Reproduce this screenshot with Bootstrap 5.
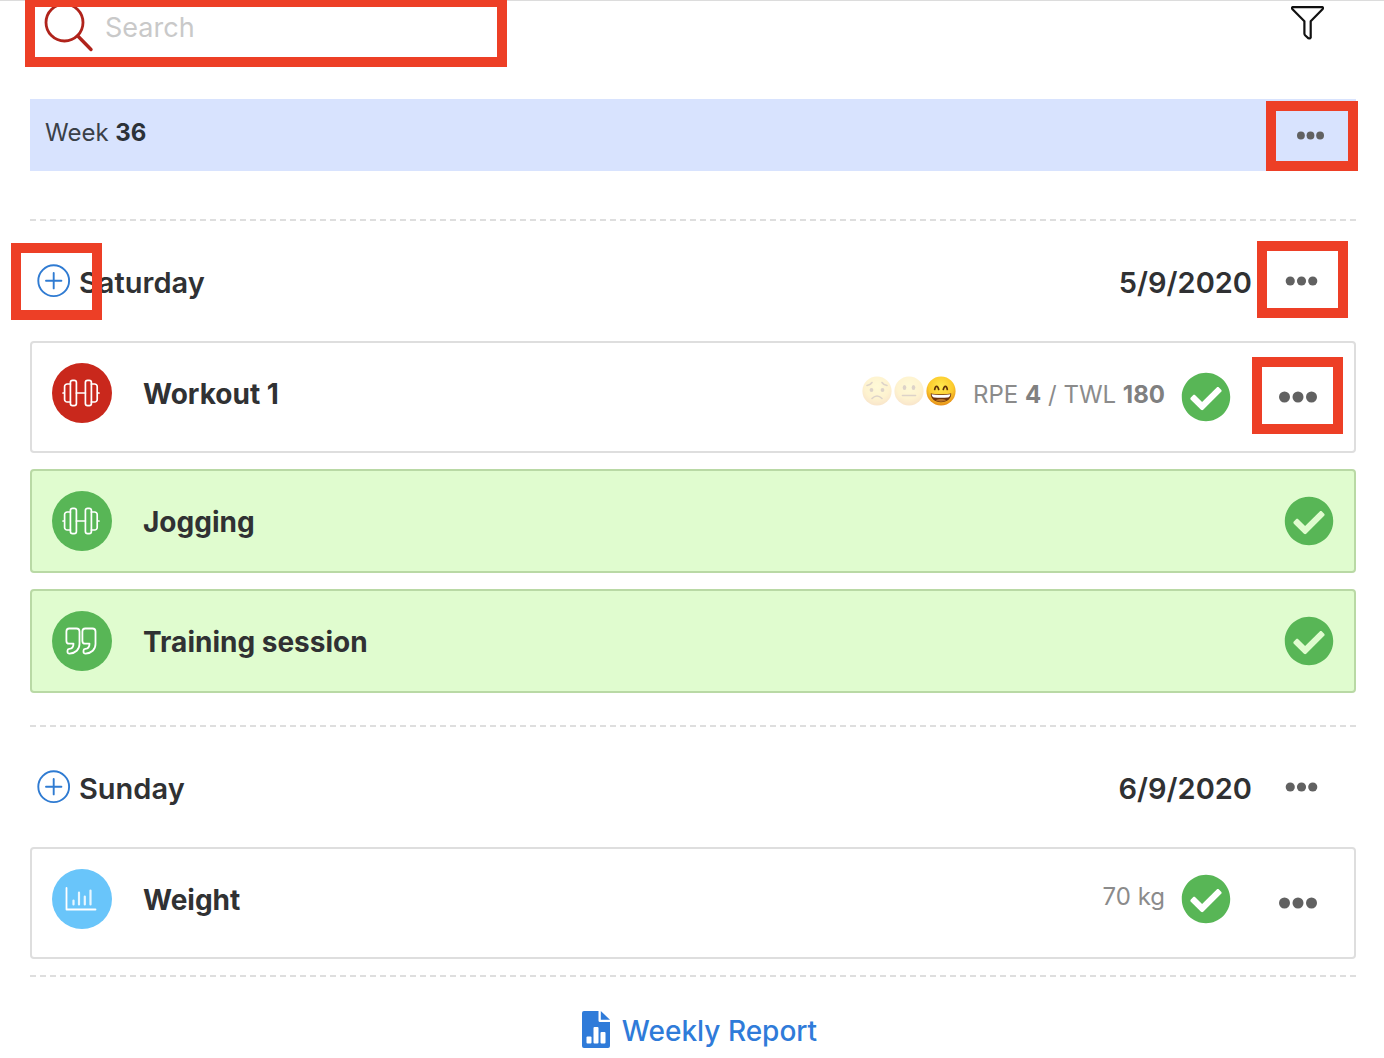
<!DOCTYPE html>
<html lang="en">
<head>
<meta charset="utf-8">
<meta name="viewport" content="width=device-width, initial-scale=1">
<title>Training week</title>
<link href="https://cdn.jsdelivr.net/npm/bootstrap@5.3.0/dist/css/bootstrap.min.css" rel="stylesheet">
<style>
  body { font-family: Inter, "Liberation Sans", sans-serif; color: #303133; background: #fff; line-height: 1.25; }
  svg { display: block; flex: none; }
  .page { padding: 0 28px 0 30px; border-top: 1px solid #dcdcdc; }
  .topbar { height: 98px; }
  .search-box { width: 472px; max-width: 80%; height: 61px; padding: 0 0 2px 14px; gap: 11px; }
  .search-box input { font-size: 27px; padding: 0 0 4px; color: #303133; background: none; box-shadow: none !important; }
  .search-box input::placeholder { color: #c9c9c9; opacity: 1; }
  .filter-btn { margin: 4px 31px 0 0; color: #111; }
  .week-bar { height: 72px; background: #d8e3fe; padding: 0 9px 0 15px; margin-bottom: 48px; font-size: 24px; color: #3a4048; }
  .week-bar strong { font-weight: 700; color: #2c3238; }
  .dash-rule { height: 2px; background: repeating-linear-gradient(90deg, #dedede 0 6px, transparent 6px 10px); }
  .day-head { height: 120px; padding: 0 18px 0 7px; font-size: 29px; }
  .day-head h2, .day-head time { font-size: 29px; line-height: 36px; font-weight: 600; margin: 0; }
  .add-btn { color: #2f7bd2; margin-right: 8px; }
  .more-btn { width: 73px; height: 60px; color: #616161; }
  .day-head .more-btn { margin-left: 13px; }
  .plain-btn { padding: 0; border: 0; border-radius: 0; line-height: 1; }
  .entry { border: 2px solid #dedede; border-radius: 4px; padding: 20px; margin-bottom: 16px; }
  .entry-tall { min-height: 112px; }
  .entry-done { background: #e0fccf; border-color: #b9d9a5; }
  .entry h3 { font-size: 28px; line-height: 34px; font-weight: 700; margin: 0; padding-top: 2px; }
  .disc { width: 60px; height: 60px; padding-right: 2px; color: #fff; }
  .disc-red { background: #c9281c; }
  .disc-green { background: #58b656; }
  .disc-blue { background: #69c5fa; }
  .entry-lead { gap: 31px; }
  .tick { color: #58b656; }
  .meta { font-size: 24px; color: #8b8b8b; gap: 16px; margin-right: 30px; }
  .meta strong { font-weight: 700; color: #808080; }
  .moods { gap: 2px; padding-bottom: 12px; margin-right: 1px; }
  .faded { opacity: .22; }
  .report { color: #2f7bd9; font-size: 28px; font-weight: 500; gap: 12px; padding: 33px 0 10px 13px; }
  /* red call-out frames laid over the controls */
  .callout { position: relative; }
  .callout::after { content: ""; position: absolute; border: 10px solid #ed3f26; pointer-events: none; inset: -10px -9px -7px -9px; }
  .callout-search::after { inset: -4px -5px -5px -5px; }
  .callout-week::after { inset: -4px -11px -6px -8px; }
  .callout-day::after { inset: -10px -10px -7px -8px; }
  .callout-add::after { inset: -21px -31px -22px -26px; z-index: 1; }
</style>
<script src="https://cdn.jsdelivr.net/npm/bootstrap@5.3.0/dist/js/bootstrap.bundle.min.js"></script>
</head>
<body>
<svg width="0" height="0" class="position-absolute" aria-hidden="true">
  <symbol id="dots" viewBox="0 0 38 12"><g fill="currentColor"><circle cx="5.5" cy="6" r="5.5"/><circle cx="19" cy="6" r="5.5"/><circle cx="32.5" cy="6" r="5.5"/></g></symbol>
  <symbol id="plus" viewBox="0 0 34 34"><g fill="none" stroke="currentColor" stroke-width="1.9" stroke-linecap="round"><circle cx="16.7" cy="16.7" r="15.4"/><path d="M16.7 9v15.4M9 16.7h15.4"/></g></symbol>
  <symbol id="tick" viewBox="0 0 512 512"><path fill="currentColor" d="M504 256c0 136.967-111.033 248-248 248S8 392.967 8 256 119.033 8 256 8s248 111.033 248 248zM227.314 387.314l184-184c6.248-6.248 6.248-16.379 0-22.627l-22.627-22.627c-6.248-6.249-16.379-6.249-22.628 0L216 308.118l-70.059-70.059c-6.248-6.248-16.379-6.248-22.628 0l-22.627 22.627c-6.248 6.248-6.248 16.379 0 22.627l104 104c6.249 6.249 16.379 6.249 22.628.001z"/></symbol>
  <symbol id="barbell" viewBox="0 0 38 28"><g fill="none" stroke="currentColor" stroke-width="1.7" stroke-linecap="round" stroke-linejoin="round"><rect x="8.4" y="1.3" width="6" height="25.4" rx="2.2"/><rect x="23.4" y="1.3" width="6" height="25.4" rx="2.2"/><path d="M8.4 5H5.200a2.600 2.600 0 0 0-2.600 2.600v12.800a2.600 2.600 0 0 0 2.600 2.600h3.200M29.400 5h3.200a2.600 2.600 0 0 1 2.600 2.600v12.800a2.600 2.600 0 0 1-2.600 2.600h-3.200M14.400 14h9M1 14h1.600M35.200 14h1.800"/></g></symbol>
</svg>

<div class="page">
  <header class="topbar d-flex justify-content-between align-items-start">
    <label class="search-box callout callout-search d-flex align-items-center">
      <svg width="50" height="54" viewBox="0 0 50 54" fill="none" stroke="#b0231b" stroke-width="2.800" stroke-linecap="round"><circle cx="20.500" cy="18.500" r="18.500"/><path d="M33.800 32 47 45.500" stroke-width="3.400"/></svg>
      <input type="search" class="form-control border-0" placeholder="Search" aria-label="Search">
    </label>
    <button type="button" class="btn plain-btn filter-btn" aria-label="Filter">
      <svg width="35" height="36" viewBox="0 0 35 36" fill="none" stroke="currentColor" stroke-width="2.200" stroke-linejoin="round"><path d="M2.500 2.200h30q1 .8 0 2L20.700 16.200V32.500q-.6 1.400-2.200.8L15.300 30.500q-.9-.8-.9-2V16.200L2.500 4.200q-1-1.200 0-2z"/></svg>
    </button>
  </header>

  <main>
    <div class="week-bar d-flex align-items-center justify-content-between">
      <div class="pb-1">Week <strong>36</strong></div>
      <button type="button" class="btn plain-btn more-btn callout callout-week d-flex align-items-center justify-content-center" aria-label="Week options"><svg width="27" height="9"><use href="#dots"/></svg></button>
    </div>

    <section>
      <div class="dash-rule"></div>
      <div class="day-head d-flex align-items-center">
        <button type="button" class="btn plain-btn add-btn callout callout-add" aria-label="Add to Saturday"><svg width="34" height="34"><use href="#plus"/></svg></button>
        <h2 class="pt-1">Saturday</h2>
        <time class="pt-1 ms-auto" datetime="2020-09-05">5/9/2020</time>
        <button type="button" class="btn plain-btn more-btn callout callout-day d-flex align-items-center justify-content-center" aria-label="Saturday options"><svg width="33" height="10"><use href="#dots"/></svg></button>
      </div>

      <article class="entry entry-tall d-flex justify-content-between">
        <div class="entry-lead d-flex align-items-center align-self-start">
          <span class="disc disc-red rounded-circle d-flex align-items-center justify-content-center"><svg width="38" height="28"><use href="#barbell"/></svg></span>
          <h3>Workout 1</h3>
        </div>
        <div class="d-flex align-items-center">
          <div class="meta d-flex align-items-center">
            <div class="moods d-flex">
              <svg class="faded" width="30" height="30" viewBox="0 0 30 30" role="img" aria-label="Worried"><circle cx="15" cy="15" r="14.600" fill="url(#skin)"/><g fill="none" stroke="#6a3d10" stroke-width="1.600" stroke-linecap="round"><path d="M10 22.500q5-5 10 0M5 9.500q3.500-.5 5-3M25 9.500q-3.500-.5-5-3"/></g><circle cx="9.500" cy="14" r="1.900" fill="#6a3d10"/><circle cx="20.500" cy="14" r="1.900" fill="#6a3d10"/></svg>
              <svg class="faded" width="30" height="30" viewBox="0 0 30 30" role="img" aria-label="Neutral"><circle cx="15" cy="15" r="14.600" fill="url(#skin)"/><path d="M8.500 19.500h13" stroke="#6a3d10" stroke-width="1.600" stroke-linecap="round"/><ellipse cx="10.500" cy="11.500" rx="1.800" ry="2.500" fill="#6a3d10"/><ellipse cx="19.500" cy="11.500" rx="1.800" ry="2.500" fill="#6a3d10"/></svg>
              <svg width="30" height="30" viewBox="0 0 30 30" role="img" aria-label="Happy">
                <defs><radialGradient id="skin" cx=".5" cy=".35" r=".7"><stop offset="0" stop-color="#ffe94e"/><stop offset=".6" stop-color="#fcca2c"/><stop offset="1" stop-color="#e07f14"/></radialGradient></defs>
                <circle cx="15" cy="15" r="14.600" fill="url(#skin)"/><path d="M4.800 17.300c3 1.300 17.400 1.300 20.400 0 .6 5-4.200 9-10.200 9s-10.800-4-10.200-9z" fill="#6e3209"/><path d="M5.600 18.200c4 1.100 14.800 1.100 18.800 0-.3 2.200-1.200 3-2.600 3.200-4 .5-9.600.5-13.600 0-1.400-.2-2.300-1-2.600-3.200z" fill="#fff"/><path d="M9.500 24.200c3-1.600 8-1.600 11 0-3 1.900-8 1.900-11 0z" fill="#b8742a"/><path d="M8.700 13.500c.7-4.200 3-4.200 4 0M17.300 13.500c1-4.200 3.300-4.200 4 0" fill="none" stroke="#5f3008" stroke-width="1.700" stroke-linecap="round"/></svg>
            </div>
            <span class="pb-1">RPE <strong>4</strong> / TWL <strong>180</strong></span>
            <svg class="tick" width="50" height="50" role="img" aria-label="Completed"><use href="#tick"/></svg>
          </div>
          <button type="button" class="btn plain-btn more-btn callout d-flex align-items-center justify-content-center" aria-label="Workout options"><svg width="38" height="12"><use href="#dots"/></svg></button>
        </div>
      </article>

      <article class="entry entry-done d-flex align-items-center justify-content-between">
        <div class="entry-lead d-flex align-items-center">
          <span class="disc disc-green rounded-circle d-flex align-items-center justify-content-center"><svg width="38" height="28"><use href="#barbell"/></svg></span>
          <h3>Jogging</h3>
        </div>
        <svg class="tick" width="50" height="50" role="img" aria-label="Completed"><use href="#tick"/></svg>
      </article>

      <article class="entry entry-done d-flex align-items-center justify-content-between">
        <div class="entry-lead d-flex align-items-center">
          <span class="disc disc-green rounded-circle d-flex align-items-center justify-content-center"><svg width="32" height="28" viewBox="0 0 32 28" fill="none" stroke="currentColor" stroke-width="1.800" stroke-linejoin="round"><path id="mark-a" d="M4.200 1.500h7.300a3 3 0 0 1 3 3V17c0 5.500-4 9.300-10 9.600-1.300 0-2-.7-2-1.700v-1.200c0-1.100.6-1.700 1.700-1.800 2.900-.2 4.300-1.900 4.300-5.200H4.200a2.800 2.800 0 0 1-2.800-2.800V4.400a2.900 2.900 0 0 1 2.800-2.900z"/><use href="#mark-a" x="16"/></svg></span>
          <h3>Training session</h3>
        </div>
        <svg class="tick" width="50" height="50" role="img" aria-label="Completed"><use href="#tick"/></svg>
      </article>
    </section>

    <section class="pt-3">
      <div class="dash-rule"></div>
      <div class="day-head d-flex align-items-center">
        <button type="button" class="btn plain-btn add-btn" aria-label="Add to Sunday"><svg width="34" height="34"><use href="#plus"/></svg></button>
        <h2 class="pt-1">Sunday</h2>
        <time class="pt-1 ms-auto" datetime="2020-09-06">6/9/2020</time>
        <button type="button" class="btn plain-btn more-btn d-flex align-items-center justify-content-center" aria-label="Sunday options"><svg width="33" height="10"><use href="#dots"/></svg></button>
      </div>

      <article class="entry entry-tall d-flex justify-content-between">
        <div class="entry-lead d-flex align-items-center align-self-start">
          <span class="disc disc-blue rounded-circle d-flex align-items-center justify-content-center"><svg width="32" height="24" viewBox="0 0 32 24" fill="none" stroke="currentColor" stroke-linecap="round" stroke-linejoin="round"><path d="M1.500 1v21.500H30.500" stroke-width="1.800"/><path d="M8.500 13.500v4M14 5.500v12M19.800 9.500v8M25.500 3.500v14" stroke-width="2.200" opacity=".85"/></svg></span>
          <h3>Weight</h3>
        </div>
        <div class="d-flex align-items-center">
          <div class="meta d-flex align-items-center pb-2">
            <span class="pb-1">70 kg</span>
            <svg class="tick" width="50" height="50" role="img" aria-label="Completed"><use href="#tick"/></svg>
          </div>
          <button type="button" class="btn plain-btn more-btn d-flex align-items-center justify-content-center" aria-label="Weight options"><svg width="38" height="12"><use href="#dots"/></svg></button>
        </div>
      </article>
      <div class="dash-rule"></div>
    </section>
  </main>

  <footer class="d-flex justify-content-center">
    <a href="#" class="report d-flex align-items-center text-decoration-none">
      <svg width="28" height="37" viewBox="0 0 28 37"><path fill="currentColor" d="M2 0h14.500v9.500a1.500 1.500 0 0 0 1.500 1.500H28v24a2 2 0 0 1-2 2H2a2 2 0 0 1-2-2V2a2 2 0 0 1 2-2z"/><path fill="currentColor" d="M18.800 0 28 8.800h-9.200z"/><g fill="#fff"><rect x="4.500" y="25.500" width="5" height="7" rx="1"/><rect x="11.500" y="16" width="5" height="16.500" rx="1"/><rect x="18.500" y="21" width="5" height="11.500" rx="1"/></g></svg>
      <span class="pt-1">Weekly Report</span>
    </a>
  </footer>
</div>
</body>
</html>
